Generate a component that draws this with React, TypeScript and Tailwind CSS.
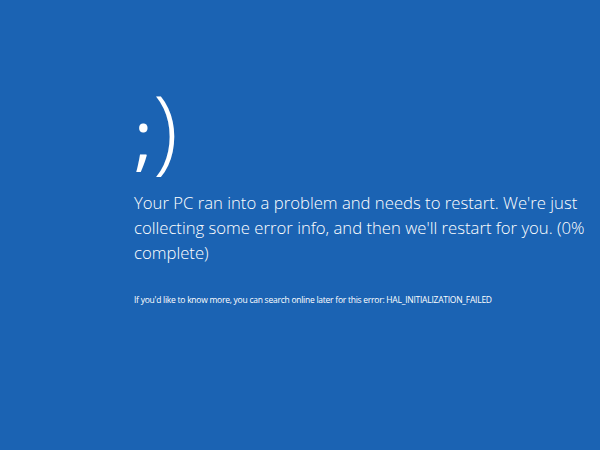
export default function App() {
  return (
    <div className="w-[600px] h-[450px] bg-[#1b63b3] text-white overflow-hidden" style={{ fontFamily: '"Open Sans", "Noto Sans", sans-serif' }}>
      <div className="pl-[134px] pt-[77px] flex flex-col">
        <div className="h-[100px] leading-[100px] whitespace-nowrap">
          <span className="text-[72px] font-normal">;</span>
          <span className="text-[92px] font-light">)</span>
        </div>
        <div className="mt-[13px] text-[16.7px] leading-[25px] font-light">
          <div>Your PC ran into a problem and needs to restart. We're just</div>
          <div>collecting some error info, and then we'll restart for you. (0%</div>
          <div>complete)</div>
        </div>
        <div className="mt-[29px] text-[8.5px] leading-[12px] tracking-[-0.25px]">
          If you'd like to know more, you can search online later for this error: HAL_INITIALIZATION_FAILED
        </div>
      </div>
    </div>
  );
}
